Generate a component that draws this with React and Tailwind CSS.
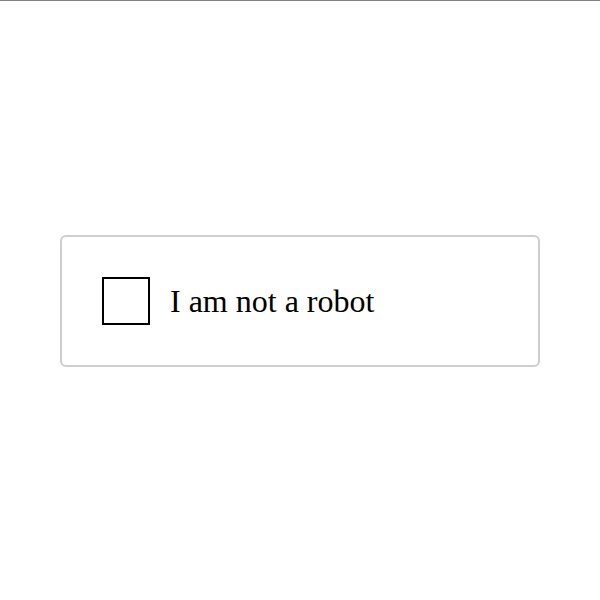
export default function App() {
  return (
    <div className="h-[600px] w-[600px] bg-white border-t border-[#808080] flex items-center justify-center" style={{ fontFamily: '"Liberation Serif", "Times New Roman", serif' }}>
      <label className="w-[480px] border-2 border-[#cfcfcf] rounded-md p-[40px] flex items-center gap-[20px] bg-white">
        <span className="w-[48px] h-[48px] border-2 border-black shrink-0" />
        <span className="text-[32px] leading-none text-black">I am not a robot</span>
      </label>
    </div>
  );
}
